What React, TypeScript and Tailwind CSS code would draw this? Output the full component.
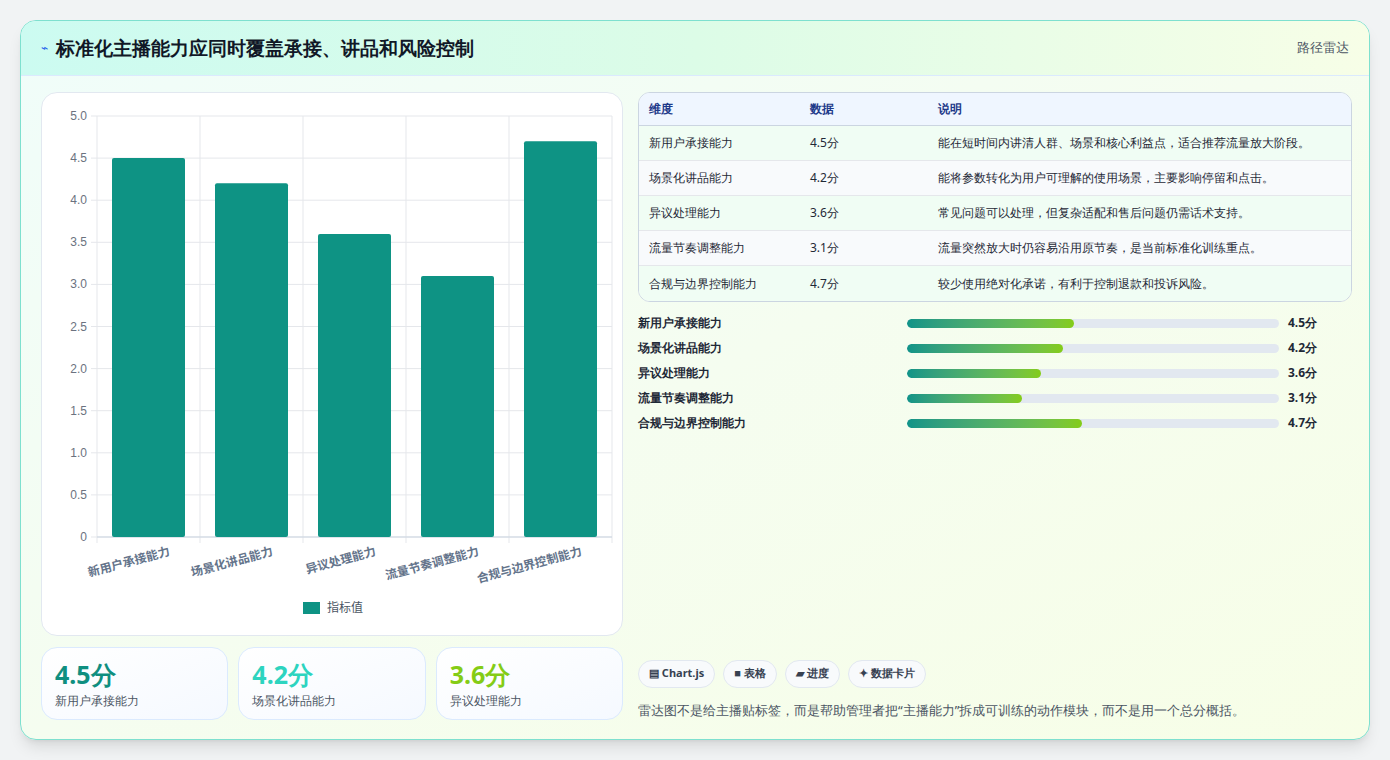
import React from 'react'

const items = [
  { name: '新用户承接能力', v: 4.5, desc: '能在短时间内讲清人群、场景和核心利益点，适合推荐流量放大阶段。' },
  { name: '场景化讲品能力', v: 4.2, desc: '能将参数转化为用户可理解的使用场景，主要影响停留和点击。' },
  { name: '异议处理能力', v: 3.6, desc: '常见问题可以处理，但复杂适配和售后问题仍需话术支持。' },
  { name: '流量节奏调整能力', v: 3.1, desc: '流量突然放大时仍容易沿用原节奏，是当前标准化训练重点。' },
  { name: '合规与边界控制能力', v: 4.7, desc: '较少使用绝对化承诺，有利于控制退款和投诉风险。' },
]

function Chart() {
  const L = 55, T = 23, R = 570, B = 444
  const h = B - T
  const cw = (R - L) / 5
  const ticks = [0, 0.5, 1, 1.5, 2, 2.5, 3, 3.5, 4, 4.5, 5]
  return (
    <svg width="582" height="544" className="block" style={{ fontFamily: '"Liberation Sans", "Noto Sans CJK SC", sans-serif' }}>
      {ticks.map((t) => {
        const y = B - (t / 5) * h
        return (
          <g key={t}>
            <line x1={L - 6} x2={R} y1={y} y2={y} stroke="#e5e7eb" />
            <text x={L - 10} y={y + 4} textAnchor="end" fontSize="12" fill="#6b7280">{t === 0 ? '0' : t.toFixed(1)}</text>
          </g>
        )
      })}
      {[0, 1, 2, 3, 4, 5].map((i) => (
        <line key={i} x1={L + i * cw} x2={L + i * cw} y1={T} y2={B + 6} stroke="#e5e7eb" />
      ))}
      <line x1={L} x2={R} y1={B} y2={B} stroke="#cbd5e1" />
      {items.map((it, i) => {
        const y = B - (it.v / 5) * h
        const x = L + i * cw + 15
        return <rect key={it.name} x={x} y={y} width={cw - 30} height={B - y} rx="2" fill="#0e9384" />
      })}
      {items.map((it, i) => {
        const cx = L + i * cw + cw / 2 + 22
        return (
          <text key={it.name} x={cx} y={B + 18} textAnchor="end" fontSize="12" fontWeight="bold" fill="#64748b" transform={`rotate(-15 ${cx} ${B + 18})`}>
            {it.name}
          </text>
        )
      })}
      <rect x="261" y="509" width="17" height="12" fill="#0e9384" />
      <text x="285" y="519" fontSize="12" fill="#4b5563">指标值</text>
    </svg>
  )
}

export default function App() {
  const stats = [
    { v: '4.5分', c: 'text-[#0f8f80]', n: '新用户承接能力' },
    { v: '4.2分', c: 'text-[#2dd4bf]', n: '场景化讲品能力' },
    { v: '3.6分', c: 'text-[#84cc16]', n: '异议处理能力' },
  ]
  return (
    <div className="w-[1390px] h-[760px] bg-[#f1f3f4] p-5 font-['Liberation_Sans','Noto_Sans_CJK_SC',sans-serif]">
      <div className="h-[720px] rounded-2xl border border-[#7ee0cf] overflow-hidden shadow-lg flex flex-col bg-gradient-to-br from-[#f0fdfa] via-[#f5fdf0] to-[#f7fee7]">
        <div className="h-[55px] shrink-0 flex items-center justify-between px-5 bg-gradient-to-r from-[#ccfbf1] via-[#dcfce7] to-[#f7fee7] border-b border-[#dbeafe]">
          <div className="flex items-center gap-2">
            <span className="text-[#2563eb] text-xs">⌁</span>
            <h1 className="text-[19px] font-bold text-[#111827]">标准化主播能力应同时覆盖承接、讲品和风险控制</h1>
          </div>
          <span className="text-[13px] text-[#4b5563]">路径雷达</span>
        </div>
        <div className="flex-1 flex gap-[15px] px-5 pt-4 pb-[19px]">
          <div className="w-[582px] flex flex-col gap-[11px]">
            <div className="h-[544px] bg-white rounded-2xl border border-[#e2e8f0]">
              <Chart />
            </div>
            <div className="flex gap-[10px]">
              {stats.map((s) => (
                <div key={s.n} className="flex-1 h-[73px] rounded-2xl border border-[#dbeafe] bg-gradient-to-br from-white to-[#f5f9ff] px-[13px] pt-[10px]">
                  <div className={`text-[25px] font-bold leading-8 ${s.c}`}>{s.v}</div>
                  <div className="text-[12px] text-[#4b5563] mt-[2px]">{s.n}</div>
                </div>
              ))}
            </div>
          </div>
          <div className="flex-1 flex flex-col">
            <div className="rounded-xl border border-[#cbd5e1] overflow-hidden bg-white w-[714px]">
              <div className="flex h-[33px] items-center bg-[#eff6ff] border-b border-[#cbd5e1] text-[12px] font-bold text-[#1e3a8a]">
                <div className="w-[171px] pl-[10px]">维度</div>
                <div className="w-[128px]">数据</div>
                <div>说明</div>
              </div>
              {items.map((it, i) => (
                <div key={it.name} className={`flex h-[35px] items-center text-[12px] text-[#1f2937] ${i < 4 ? 'border-b border-[#e5e7eb]' : ''} ${i % 2 === 0 ? 'bg-[#f0fdf4]' : 'bg-[#f8fafc]'}`}>
                  <div className="w-[171px] pl-[10px]">{it.name}</div>
                  <div className="w-[128px]">{it.v}分</div>
                  <div>{it.desc}</div>
                </div>
              ))}
            </div>
            <div className="mt-[13px] flex flex-col gap-[9px] w-[714px]">
              {items.map((it) => (
                <div key={it.name} className="flex items-center h-4 text-[12px] font-bold text-[#1f2937]">
                  <div className="w-[269px]">{it.name}</div>
                  <div className="w-[372px] h-[9px] rounded-full bg-[#e2e8f0] overflow-hidden">
                    <div className="h-full rounded-full bg-gradient-to-r from-[#0f9488] to-[#84cc16]" style={{ width: `${it.v * 10}%` }} />
                  </div>
                  <div className="ml-[9px]">{it.v}分</div>
                </div>
              ))}
            </div>
            <div className="mt-auto">
              <div className="flex gap-[8px]">
                {['▤ Chart.js', '■ 表格', '▰ 进度', '✦ 数据卡片'].map((c) => (
                  <span key={c} className="h-[28px] px-[10px] flex items-center rounded-full border border-[#e2e8f0] bg-[#f8fafc] text-[11px] font-bold text-[#374151]">{c}</span>
                ))}
              </div>
              <p className="mt-[13px] text-[13px] text-[#4b5563]">雷达图不是给主播贴标签，而是帮助管理者把“主播能力”拆成可训练的动作模块，而不是用一个总分概括。</p>
            </div>
          </div>
        </div>
      </div>
    </div>
  )
}
